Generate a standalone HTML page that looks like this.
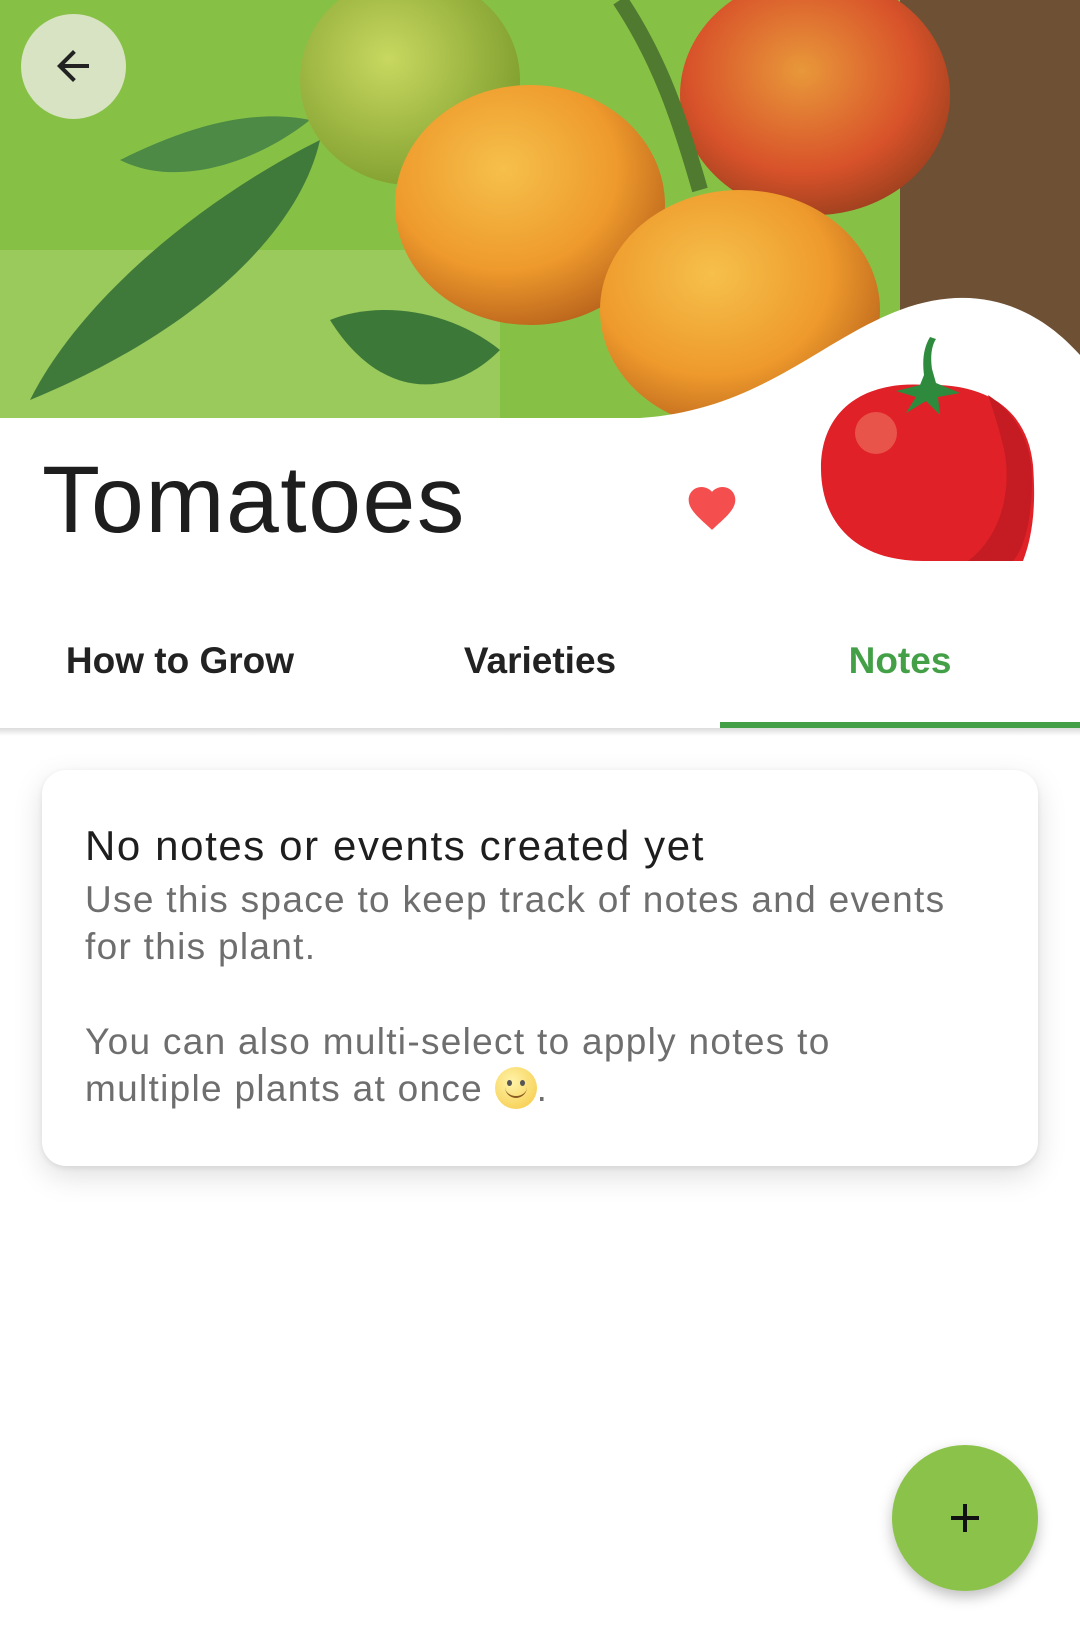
<!DOCTYPE html>
<html><head><meta charset="utf-8"><style>
*{margin:0;padding:0;box-sizing:border-box}
body{width:1080px;height:1628px;background:#fff;font-family:"Liberation Sans",sans-serif;position:relative;overflow:hidden}
.hero{position:absolute;left:0;top:0;width:1080px;height:418px;overflow:hidden}
.abs{position:absolute}
.title{position:absolute;left:42px;top:446px;font-size:95px;color:#1e1e1e;letter-spacing:1.5px}
.tab{position:absolute;top:640px;width:360px;text-align:center;font-size:37px;font-weight:600;color:#222}
.card{position:absolute;left:42px;top:770px;width:996px;height:396px;background:#fff;border-radius:24px;box-shadow:0 10px 30px rgba(0,0,0,0.13),0 2px 6px rgba(0,0,0,0.08)}
.h{position:absolute;left:43px;top:52px;font-size:42px;color:#1e1e1e;letter-spacing:1.6px}
.p{position:absolute;left:43px;font-size:37px;color:#6e6e6e;line-height:47px;letter-spacing:1.3px}
.fab{position:absolute;left:892px;top:1445px;width:146px;height:146px;border-radius:50%;background:#8bc34a;box-shadow:0 6px 14px rgba(0,0,0,0.25)}
</style></head><body>
<div class="hero">
 <svg width="1080" height="418" class="abs" style="left:0;top:0">
  <defs>
   <radialGradient id="o1" cx="40%" cy="35%" r="70%"><stop offset="0" stop-color="#f6c04a"/><stop offset="0.6" stop-color="#ee9a2c"/><stop offset="1" stop-color="#b8621c"/></radialGradient>
   <radialGradient id="o2" cx="45%" cy="40%" r="70%"><stop offset="0" stop-color="#e8983a"/><stop offset="0.6" stop-color="#d8522a"/><stop offset="1" stop-color="#8a3a1a"/></radialGradient>
   <radialGradient id="g1" cx="40%" cy="40%" r="70%"><stop offset="0" stop-color="#c8d860"/><stop offset="1" stop-color="#7a9a2a"/></radialGradient>
  </defs>
  <rect x="0" y="0" width="1080" height="418" fill="#86c146"/>
  <rect x="0" y="250" width="500" height="168" fill="#a9cf6a" opacity="0.6"/>
  <rect x="900" y="0" width="180" height="418" fill="#6e5034"/>
  <path d="M30 400 C80 300 200 200 320 140 C300 230 200 330 30 400Z" fill="#3f7a3a"/>
  <path d="M120 160 C200 120 260 110 310 120 C260 160 180 190 120 160Z" fill="#4c8a45"/>
  <path d="M330 320 C380 300 450 310 500 350 C450 400 380 400 330 320Z" fill="#3c7838"/>
  <ellipse cx="410" cy="80" rx="110" ry="105" fill="url(#g1)"/>
  <ellipse cx="530" cy="205" rx="135" ry="120" fill="url(#o1)"/>
  <ellipse cx="815" cy="95" rx="135" ry="120" fill="url(#o2)"/>
  <ellipse cx="740" cy="310" rx="140" ry="120" fill="url(#o1)"/>
  <path d="M620 0 C660 60 680 120 700 190" stroke="#4f7a30" stroke-width="16" fill="none"/>
  <path d="M0 418 L640 418 C760 410 820 340 900 310 C980 280 1040 310 1080 355 L1080 418Z" fill="#fff"/>
 </svg>
</div>
<div class="abs" style="left:21px;top:14px;width:105px;height:105px;border-radius:50%;background:rgba(235,235,225,0.8)"></div>
<svg class="abs" style="left:49px;top:42px" width="48" height="48" viewBox="0 0 24 24"><path d="M20 11H7.83l5.59-5.59L12 4l-8 8 8 8 1.41-1.41L7.83 13H20v-2z" fill="#222"/></svg>
<div class="title">Tomatoes</div>
<svg class="abs" style="left:684px;top:480px" width="56" height="56" viewBox="0 0 24 24"><path d="M12 21.35l-1.45-1.32C5.4 15.36 2 12.28 2 8.5 2 5.42 4.42 3 7.5 3c1.74 0 3.41.81 4.5 2.09C13.09 3.81 14.76 3 16.5 3 19.58 3 22 5.42 22 8.5c0 3.78-3.4 6.86-8.55 11.54L12 21.35z" fill="#f44e4e"/></svg>
<svg class="abs" style="left:818px;top:335px" width="220" height="230" viewBox="0 0 220 230">
 <path d="M108 50 C40 45 2 80 3 135 C4 190 40 226 105 226 L205 226 C215 200 218 170 215 130 C210 80 175 48 108 50Z" fill="#e02127"/>
 <path d="M170 60 C200 80 215 110 214 150 C213 190 205 215 195 226 L150 226 C185 200 195 150 185 110 C180 90 175 75 170 60Z" fill="#c41c22"/>
 <ellipse cx="58" cy="98" rx="21" ry="21" fill="#e8534a"/>
 <path d="M102 50 L78 56 L98 62 L88 78 L108 66 L122 80 L120 62 L142 58 L118 48 L114 34 C112 20 114 10 118 4 L112 2 C106 12 104 24 106 40 Z" fill="#2e8b3e"/>
</svg>
<div class="tab" style="left:0">How to Grow</div>
<div class="tab" style="left:360px">Varieties</div>
<div class="tab" style="left:720px;color:#43a047">Notes</div>
<div class="abs" style="left:0;top:728px;width:1080px;height:8px;background:linear-gradient(rgba(0,0,0,0.14),rgba(0,0,0,0))"></div>
<div class="abs" style="left:720px;top:722px;width:360px;height:6px;background:#43a047"></div>
<div class="card">
 <div class="h">No notes or events created yet</div>
 <div class="p" style="top:106px">Use this space to keep track of notes and events<br>for this plant.</div>
 <div class="p" style="top:248px">You can also multi-select to apply notes to<br>multiple plants at once <span style="display:inline-block;width:42px;height:42px;border-radius:50%;background:radial-gradient(circle at 40% 35%,#fff3a8,#f5c842);vertical-align:-8px;position:relative"><span style="position:absolute;left:12px;top:13px;width:5px;height:6px;background:#555;border-radius:50%"></span><span style="position:absolute;left:25px;top:13px;width:5px;height:6px;background:#555;border-radius:50%"></span><span style="position:absolute;left:10px;top:18px;width:22px;height:13px;border-bottom:2px solid #8a5a20;border-radius:0 0 12px 12px"></span></span>.</div>
</div>
<div class="fab"><svg class="abs" style="left:49px;top:49px" width="48" height="48" viewBox="0 0 24 24"><path d="M19 13h-6v6h-2v-6H5v-2h6V5h2v6h6v2z" fill="#111"/></svg></div>
</body></html>
